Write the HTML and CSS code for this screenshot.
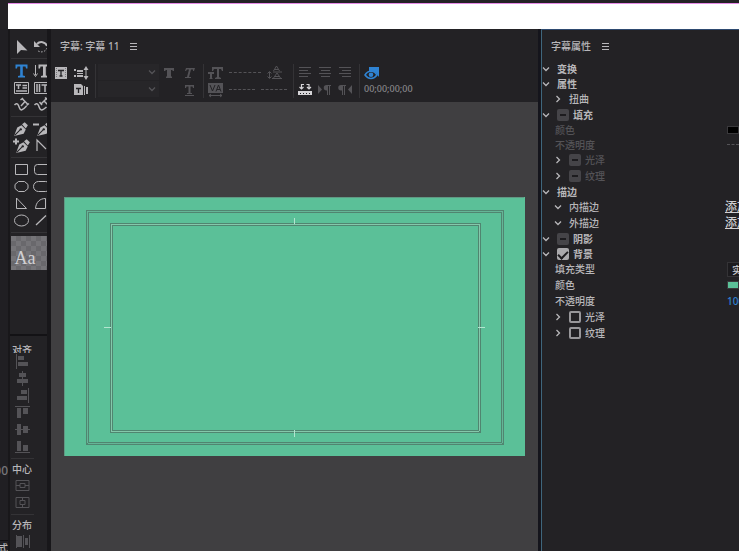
FILE: index.html
```html
<!DOCTYPE html>
<html>
<head>
<meta charset="utf-8">
<title>字幕</title>
<link rel="stylesheet" href="styles.css">
</head>
<body>
<svg class="defs" aria-hidden="true">
  <symbol id="down" viewBox="0 0 8 8"><path d="M1 2.500 4 5.500 7 2.500" fill="none" stroke="currentColor" stroke-width="1.300"/></symbol>
  <symbol id="right" viewBox="0 0 8 8"><path d="M2.500 1 5.500 4 2.500 7" fill="none" stroke="currentColor" stroke-width="1.300"/></symbol>
  <symbol id="menu" viewBox="0 0 8 8"><path d="M0 1.500h7M0 4.500h7M0 7.500h7" fill="none" stroke="currentColor"/></symbol>
  <symbol id="pen" viewBox="0 0 16 16"><path d="M1 15 4 7l4-2 4 4-2 4z" fill="currentColor"/><path d="M8.500 4 11 2l3 3-2 3z" fill="currentColor"/><path d="M1.500 14.500 6.500 9.500" stroke="#232225" stroke-width="1"/><circle cx="7.300" cy="8.800" r="1.100" fill="#232225"/></symbol>
</svg>

<div class="titlebar"></div>
<main class="app">
  <aside class="edge"><span class="edge-time">00</span><span class="edge-name">式</span></aside>

  <div class="side">
    <nav class="tools" aria-label="工具">
      <div class="group">
        <button aria-label="选择"><svg viewBox="0 0 17 17"><path d="M4 2v14l4-4 6.500 .5z" fill="currentColor"/></svg></button>
        <button aria-label="旋转"><svg viewBox="0 0 17 17" fill="none" stroke="currentColor"><path d="M4 6a6 6 0 0 1 10 2" stroke-width="2"/><path d="M1 3v6h6z" fill="currentColor" stroke="none"/><path d="M14 10a6 6 0 0 1-10 2" stroke-dasharray="1.500 1.500"/></svg></button>
      </div>
      <hr>
      <div class="group">
        <button class="active" aria-label="文字"><svg viewBox="0 0 17 17"><path d="M2.500 2.500h12v4h-1.500l-.5-2h-2.700v9l2.200.5v1.500H5v-1.500l2.200-.5v-9H4.500l-.5 2H2.500z" fill="currentColor"/></svg></button>
        <button aria-label="垂直文字"><svg viewBox="0 0 17 17"><path d="M5.500 2.500H17v4h-1.500l-.5-2h-2.200v9l2 .5v1.500H8v-1.500l2-.5v-9H7.500l-.5 2H5.500z" fill="currentColor"/><path d="M2.500 3v10M.5 11.500l2 3 2-3" fill="none" stroke="currentColor"/></svg></button>
        <button aria-label="区域文字"><svg viewBox="0 0 17 17" fill="none" stroke="currentColor"><path d="M1.500 3.500h14v11h-14z"/><path d="M3 6h5M5.500 6v4M9.500 6.500h4.500M9.500 9h4.500M3 12h11" stroke-width="1.500"/></svg></button>
        <button aria-label="垂直区域文字"><svg viewBox="0 0 17 17" fill="none" stroke="currentColor"><path d="M1.500 3.500h17v11h-17z"/><path d="M4 5v8M6.500 5v8M8.500 6h7M12 6v7M15.500 8v5" stroke-width="1.500"/></svg></button>
        <button aria-label="路径文字"><svg viewBox="0 0 17 17" fill="none" stroke="currentColor"><path d="M1.500 9c3-3 4 0 5 3s3 2.500 7-2" stroke-width="1.500"/><path d="m9 2.500 6 6M12 5.500 8 10M7.500 4 10 2M13.500 9.500 16 7.500" stroke-width="1.500"/></svg></button>
        <button aria-label="垂直路径文字"><svg viewBox="0 0 17 17" fill="none" stroke="currentColor"><path d="M1.500 9c3-3 4 0 5 3s3 2.500 7-1" stroke-width="1.500"/><path d="m14 2-6 6M11 5l5 5M6.500 6 9 9M12 1.500 15 4" stroke-width="1.500"/></svg></button>
      </div>
      <hr>
      <div class="group">
        <button aria-label="钢笔"><svg viewBox="0 0 17 17"><use href="#pen"/></svg></button>
        <button aria-label="删除锚点"><svg viewBox="0 0 17 17"><path d="M0 4.500h6" stroke="currentColor" stroke-width="2"/><use href="#pen" x="3"/></svg></button>
        <button aria-label="添加锚点"><svg viewBox="0 0 17 17"><path d="M0 4.500h6M3 1.500v6" stroke="currentColor" stroke-width="2"/><use href="#pen" x="2"/></svg></button>
        <button aria-label="转换锚点"><svg viewBox="0 0 17 17"><path d="M4 14V3l9 9" fill="none" stroke="currentColor" stroke-width="1.200"/></svg></button>
      </div>
      <hr>
      <div class="group">
        <button aria-label="矩形"><svg viewBox="0 0 17 17" fill="none" stroke="currentColor"><path d="M2.500 3.500h12v10h-12z"/></svg></button>
        <button aria-label="圆角矩形"><svg viewBox="0 0 17 17" fill="none" stroke="currentColor"><rect x="1.500" y="3.500" width="16" height="10" rx="3"/></svg></button>
        <button aria-label="切角矩形"><svg viewBox="0 0 17 17" fill="none" stroke="currentColor"><path d="M5.500 3.500h6l3.500 3v4l-3.500 3h-6L2 10.500v-4z"/></svg></button>
        <button aria-label="圆矩形"><svg viewBox="0 0 17 17" fill="none" stroke="currentColor"><rect x=".5" y="3.500" width="17" height="10" rx="5"/></svg></button>
        <button aria-label="楔形"><svg viewBox="0 0 17 17" fill="none" stroke="currentColor"><path d="M3.500 3v10.500h10z"/></svg></button>
        <button aria-label="弧形"><svg viewBox="0 0 17 17" fill="none" stroke="currentColor"><path d="M2.500 13.500C3 7 7 3.500 12.500 3.500v10z"/></svg></button>
        <button aria-label="椭圆"><svg viewBox="0 0 17 17" fill="none" stroke="currentColor"><ellipse cx="8.500" cy="8.500" rx="7" ry="5.500"/></svg></button>
        <button aria-label="直线"><svg viewBox="0 0 17 17" fill="none" stroke="currentColor"><path d="M3 13 13 3.500" stroke-width="1.300"/></svg></button>
      </div>
      <hr>
      <button class="style-swatch">Aa</button>
    </nav>

    <section class="align">
      <h2 class="clipped">对齐</h2>
      <button disabled aria-label="水平靠左"><svg viewBox="0 0 17 17"><path d="M2 1h1v15H2zM4 3h6v4H4zM4 9h10v4H4z" fill="currentColor"/></svg></button>
      <button disabled aria-label="水平居中"><svg viewBox="0 0 17 17"><path d="M8 1h1v15H8zM5 3h7v4H5zM3 9h11v4H3z" fill="currentColor"/></svg></button>
      <button disabled aria-label="水平靠右"><svg viewBox="0 0 17 17"><path d="M14 1h1v15h-1zM7 3h6v4H7zM3 9h10v4H3z" fill="currentColor"/></svg></button>
      <button disabled aria-label="垂直靠上"><svg viewBox="0 0 17 17"><path d="M1 2h15v1H1zM3 4h4v10H3zM9 4h5v6H9z" fill="currentColor"/></svg></button>
      <button disabled aria-label="垂直居中"><svg viewBox="0 0 17 17"><path d="M1 8h15v1H1zM3 3h4v11H3zM9 5h5v7H9z" fill="currentColor"/></svg></button>
      <button disabled aria-label="垂直靠下"><svg viewBox="0 0 17 17"><path d="M1 14h15v1H1zM3 3h4v10H3zM9 7h5v6H9z" fill="currentColor"/></svg></button>
      <hr>
      <h2>中心</h2>
      <button disabled aria-label="垂直居中于画面"><svg viewBox="0 0 17 17" fill="none" stroke="currentColor"><path d="M2 3.500h13v10H2zM6 6.500h5v4H6zM2 8.500h4M11 8.500h4"/></svg></button>
      <button disabled aria-label="水平居中于画面"><svg viewBox="0 0 17 17" fill="none" stroke="currentColor"><path d="M2 3.500h13v10H2zM6 6.500h5v4H6zM8.500 3.500v3M8.500 10.500v3"/></svg></button>
      <hr>
      <h2>分布</h2>
      <button disabled aria-label="水平分布"><svg viewBox="0 0 17 17"><path d="M2 2h1v13H2zM3 3h5v11H3zM9 2h1v13H9zM11 5h3v7h-3zM15 2h1v13h-1z" fill="currentColor"/></svg></button>
      <button disabled aria-label="分布居中"><svg viewBox="0 0 17 17"><path d="M8 1h1v15H8zM5 4h7v4H5z" fill="currentColor"/></svg></button>
    </section>
  </div>

  <section class="editor">
    <header class="panel-head"><h1>字幕: 字幕 11</h1><button aria-label="面板菜单"><svg class="menu"><use href="#menu"/></svg></button></header>
    <div class="toolbar">
      <div class="bar-group pair">
        <button aria-label="新建字幕"><svg viewBox="0 0 16 16"><path d="M2 2h12v12H2z" fill="currentColor"/><path d="M5 5.500h6M8 5v6M6.500 11h3" stroke="#232225" stroke-width="1.300"/><path d="M3.500 3v10M12.500 3v10" stroke="#77767a" stroke-dasharray="1 1"/></svg></button>
        <button aria-label="滚动选项"><svg viewBox="0 0 16 16"><path d="M1 4h2v2H1zM1 10h2v2H1zM4 5h6v2H4zM4 8h6v1H4zM4 10h6v2H4zM12.500 4h1v8h-1zM13 1l2.500 4h-5zM13 15l-2.500-4h5z" fill="currentColor"/></svg></button>
        <span></span>
        <button aria-label="模板"><svg viewBox="0 0 16 16"><path d="M1 2h7l2 2v9H1zM11 4h1v9h-1zM13 5h2v7h-2z" fill="currentColor"/><path d="M3 6.500h5M5.500 6v5" stroke="#232225" stroke-width="1.300"/></svg></button>
      </div>
      <div class="bar-group combos">
        <label class="combo"><select disabled aria-label="字体"><option></option></select><svg><use href="#down"/></svg></label>
        <label class="combo"><select disabled aria-label="字体样式"><option></option></select><svg><use href="#down"/></svg></label>
      </div>
      <div class="bar-group pair off">
        <button disabled aria-label="粗体"><svg viewBox="0 0 16 16"><path d="M3 3h10v3h-1l-1-1h-1v6l1 1v1H5v-1l1-1V5H5L4 6H3z" fill="currentColor"/></svg></button>
        <button disabled aria-label="斜体"><svg viewBox="0 0 16 16"><path d="M5 3h9l-1 3h-1V4.500h-2L8 12h2v1H4v-1h2l2-7.500H6L5 6H4z" fill="currentColor"/></svg></button>
        <span></span>
        <button disabled aria-label="下划线"><svg viewBox="0 0 16 16"><path d="M4 3h9v3h-1l-.5-1.500h-2V11H11v1H6v-1h1.500V4.500h-2L5 6H4zM4 13h9v1H4z" fill="currentColor"/></svg></button>
      </div>
      <div class="bar-group metrics off">
        <div class="line">
          <svg viewBox="0 0 16 16"><path d="M5 2h11v4h-1l-1-2h-2v8l2 1v1H8v-1l2-1V4H7L6 6H5zM1 7h6v2H5v4l1 1H2l1-1V9H1z" fill="currentColor"/></svg>
          <span class="dash wide"></span>
          <svg viewBox="0 0 16 16" fill="none" stroke="currentColor"><path d="m6.500 6 3-5 3 5M7.500 4.500h4M6 7h9M6.500 13l3.500-5 3.500 5M7.500 11.500h5M5 13.500h10M2.500 7v6M.5 8.500l2-2 2 2M.5 11.500l2 2 2-2"/></svg>
        </div>
        <div class="line">
          <svg viewBox="0 0 16 16"><path d="M1 1h15v10H1z" fill="currentColor"/><path d="m3 3 2.500 6L8 3M9 9.500 11.500 3 14 9.500M10 7.500h3" fill="none" stroke="#232225"/><path d="M2 13.500h13M4 12l-2 1.500L4 15M13 12l2 1.500-2 1.500" fill="none" stroke="currentColor"/></svg>
          <span class="dash"></span><span class="dash"></span>
        </div>
      </div>
      <div class="bar-group triple off">
        <button disabled aria-label="左对齐"><svg viewBox="0 0 16 16" stroke="currentColor"><path d="M2 2.500h12M2 5.500h9M2 8.500h12M2 11.500h9"/></svg></button>
        <button disabled aria-label="居中"><svg viewBox="0 0 16 16" stroke="currentColor"><path d="M2 2.500h12M4 5.500h9M2 8.500h12M4 11.500h9"/></svg></button>
        <button disabled aria-label="右对齐"><svg viewBox="0 0 16 16" stroke="currentColor"><path d="M2 2.500h12M5 5.500h9M2 8.500h12M5 11.500h9"/></svg></button>
        <button class="bright" aria-label="制表位"><svg viewBox="0 0 16 16"><path d="M1 9h14v4H1z" fill="currentColor"/><path d="M3.500 11v1M6.500 11v1M9.500 11v1M12.500 11v1" stroke="#232225"/><path d="M4.500 7V2.500H7M9.500 2.500H12V7M2.500 5l2 2 2-2M10 5l2 2 2-2" fill="none" stroke="currentColor" stroke-width="1.200"/></svg></button>
        <button disabled aria-label="从左至右"><svg viewBox="0 0 16 16"><path d="m1 3 4 4.500L1 12zM14 3H9.500a2.500 2.500 0 0 0 0 5.500h.5V13h1V4h1v9h1V4h1z" fill="currentColor"/></svg></button>
        <button disabled aria-label="从右至左"><svg viewBox="0 0 16 16"><path d="m15 3-4 4.500 4 4.500zM9 3H4a2.500 2.500 0 0 0 0 5.500h1V13h1V4h1v9h1V4h1z" fill="currentColor"/></svg></button>
      </div>
      <div class="bar-group video">
        <button aria-label="显示背景视频"><svg viewBox="0 0 16 16"><path d="M5 2h10v10l-3-4-7-2z" fill="currentColor"/><path d="M1 10c3-5 9-5 12 0-3 4.500-9 4.500-12 0z" fill="#232225" stroke="currentColor" stroke-width="1.500"/><circle cx="7" cy="9.800" r="2.300" fill="currentColor"/></svg></button>
        <span class="timecode">00;00;00;00</span>
      </div>
    </div>
    <div class="stage">
      <svg class="frame" viewBox="0 0 461 260" fill="none" shape-rendering="crispEdges">
        <path d="M0 0h461v260H0z" fill="#5bc098"/>
        <path d="M.5 260V.5h460" stroke="#609983"/>
        <g stroke="#508570" stroke-width="3"><path d="M23.500 14.500h415v232h-415zM47.500 27.500h368v207h-368z"/></g>
        <path d="M23.500 14.500h415v232h-415z" stroke="#65b597"/>
        <path d="M47.500 27.500h368v207h-368z" stroke="#84c8ab"/>
        <path d="M230.500 21v6M230.500 233v7M40 130.500h7M414 130.500h7" stroke="#b2e5cf" stroke-width="1"/>
      </svg>
    </div>
  </section>

  <section class="props">
    <header class="panel-head"><h1>字幕属性</h1><button aria-label="面板菜单"><svg class="menu"><use href="#menu"/></svg></button></header>
    <div class="rows">
      <div class="row top"><button aria-label="折叠"><svg><use href="#down"/></svg></button><span>变换</span></div>
      <div class="row top"><button aria-label="折叠"><svg><use href="#down"/></svg></button><span>属性</span></div>
      <div class="row sub"><button aria-label="展开"><svg><use href="#right"/></svg></button><span>扭曲</span></div>
      <div class="row top"><button aria-label="折叠"><svg><use href="#down"/></svg></button><label><input type="checkbox" disabled>填充</label></div>
      <div class="row field off"><span class="name">颜色</span><button class="color black" disabled aria-label="填充颜色"></button></div>
      <div class="row field off"><span class="name">不透明度</span><span class="dash"></span></div>
      <div class="row sub off"><button aria-label="展开"><svg><use href="#right"/></svg></button><label><input type="checkbox" disabled>光泽</label></div>
      <div class="row sub off"><button aria-label="展开"><svg><use href="#right"/></svg></button><label><input type="checkbox" disabled>纹理</label></div>
      <div class="row top"><button aria-label="折叠"><svg><use href="#down"/></svg></button><span>描边</span></div>
      <div class="row sub"><button aria-label="折叠"><svg><use href="#down"/></svg></button><span class="name">内描边</span><a href="#inner">添加</a></div>
      <div class="row sub"><button aria-label="折叠"><svg><use href="#down"/></svg></button><span class="name">外描边</span><a href="#outer">添加</a></div>
      <div class="row top"><button aria-label="折叠"><svg><use href="#down"/></svg></button><label><input type="checkbox" disabled>阴影</label></div>
      <div class="row top"><button aria-label="折叠"><svg><use href="#down"/></svg></button><label><input type="checkbox" checked>背景</label></div>
      <div class="row field live"><label class="name" for="fill">填充类型</label><select id="fill"><option>实底</option></select></div>
      <div class="row field live"><span class="name">颜色</span><button class="color green" aria-label="背景颜色"></button></div>
      <div class="row field live"><span class="name">不透明度</span><span class="number">100 %</span></div>
      <div class="row sub"><button aria-label="展开"><svg><use href="#right"/></svg></button><label><input type="checkbox">光泽</label></div>
      <div class="row sub"><button aria-label="展开"><svg><use href="#right"/></svg></button><label><input type="checkbox">纹理</label></div>
    </div>
  </section>
</main>
</body>
</html>
```
FILE: styles.css
```css
:root {
  --panel: #232225;
  --gutter: #18171a;
  --text: #b8b7ba;
  --off: #545357;
  --blue: #2f83d3;
}

* { box-sizing: border-box; }

body {
  margin: 0;
  height: 100vh;
  overflow: hidden;
  display: flex;
  flex-direction: column;
  background: var(--panel);
  color: var(--text);
  font: 500 10px/14px "Noto Sans", "Noto Sans CJK SC", sans-serif;
}

.defs { position: absolute; width: 0; height: 0; }

button {
  padding: 0;
  border: 0;
  background: none;
  color: inherit;
  font: inherit;
  display: flex;
  align-items: center;
  justify-content: center;
}

h1, h2 { margin: 0; font: inherit; }

hr { margin: 3px 0; border: 0; border-top: 1px solid #343336; width: 100%; }

.titlebar {
  flex: none;
  height: 26px;
  margin: 3px 0 0 8px;
  background: #fff;
  border-top: 1px solid #e58be6;
}

.app {
  flex: 1;
  min-height: 0;
  display: grid;
  grid-template-columns: 8px 43px minmax(0, 1fr) 26.8%;
}

/* Neighbouring panel, mostly out of view */
.edge {
  overflow: hidden;
  display: flex;
  flex-direction: column;
  justify-content: flex-end;
  align-items: flex-end;
  background: #201f23;
  color: #77767a;
}
.edge-time { font-size: 12px; margin-bottom: 62px; }
.edge-name { color: var(--text); border-top: 1px solid #111013; margin-bottom: -4px; }

/* Tools */
.side {
  min-height: 0;
  overflow: hidden;
  display: flex;
  flex-direction: column;
  border-left: 2px solid var(--gutter);
  border-right: 4px solid var(--gutter);
}
.tools { padding: 9px 0 64px 1px; border-bottom: 2px solid #131215; }
.group {
  display: grid;
  grid-template-columns: 17px 17px;
  grid-auto-rows: 17px;
  column-gap: 3px;
  padding-left: 2px;
  overflow: hidden;
}
.group svg, .align svg { width: 17px; height: 17px; flex: none; }
.active { color: var(--blue); }
.style-swatch {
  width: 100%;
  height: 34px;
  padding: 10px 8px 0 0;
  color: #d0cfd2;
  font: 18px/20px "Liberation Serif", serif;
  background: repeating-conic-gradient(#69686c 0 25%, #757478 0 50%) 0 0 / 10px 10px;
}

.align { flex: 1; min-height: 0; padding: 8px 13px 0 1px; }
.align button { width: 100%; height: 17px; color: var(--off); }
.align h2 { line-height: 15px; padding-left: 1px; }
.align .clipped { height: 9px; line-height: 13px; overflow: hidden; }

/* Editor */
.editor { display: flex; flex-direction: column; min-height: 0; border-right: 3px solid #15151c; }
.panel-head { display: flex; align-items: center; gap: 11px; height: 33px; padding-left: 9px; flex: none; }
.menu { width: 8px; height: 8px; }

.toolbar { display: flex; height: 40px; padding: 2px 0 4px 2px; flex: none; }
.bar-group { padding-right: 6px; margin-right: 2px; border-right: 1px solid #343336; }
.bar-group svg { width: 16px; height: 16px; flex: none; }
.pair { display: grid; grid-template-columns: 16px 16px; grid-auto-rows: 17px; column-gap: 4px; }
.combos { display: grid; grid-auto-rows: 16px; row-gap: 1px; border: 0; padding: 0; }
.combo { position: relative; display: flex; }
.combo select { width: 61px; border: 0; background: #29282b; appearance: none; }
.bar-group .combo svg { position: absolute; right: 3px; top: 4px; width: 8px; height: 8px; color: var(--off); }
.off { color: var(--off); }
.bright { color: #d5d4d7; }
.metrics { padding-left: 1px; }
.line { display: flex; align-items: center; gap: 6px; height: 17px; }
.dash { width: 26px; border-top: 1px dashed var(--off); }
.dash.wide { width: 32px; }
.triple { display: grid; grid-template-columns: repeat(3, 16px); grid-auto-rows: 17px; column-gap: 4px; padding-left: 1px; }
.video { border: 0; display: grid; grid-template-rows: 17px 17px; justify-items: start; padding-left: 2px; }
.video button { color: var(--blue); }
.timecode { color: #87868a; font-size: 9px; line-height: 15px; }

.stage {
  flex: 1;
  min-height: 0;
  padding: 0 13px;
  display: flex;
  align-items: center;
  background: #403f41;
}
.frame { width: 100%; display: block; }

/* Properties */
.props { overflow: hidden; border-left: 1px solid #3f667c; border-top: 1px solid #2e4a70; }
.props .panel-head { height: 31px; }
.row { display: flex; align-items: center; height: 15px; white-space: nowrap; }
.row.top { font-weight: 700; }
.row.sub { height: 16px; padding-left: 12px; }
.row.live { height: 16px; }
.row.field { padding-left: 13px; }
.row > button:first-child { width: 8px; margin-right: 7px; color: var(--text); }
.row svg { width: 8px; height: 8px; }
.row label { display: flex; align-items: center; gap: 4px; }
.name { flex: none; width: 172px; }
.row.sub .name { width: 156px; }
.row a { color: #d0cfd2; font-size: 12px; }
.row input {
  appearance: none;
  width: 12px;
  height: 12px;
  margin: 0;
  border: 2px solid #98979a;
  border-radius: 2px;
  display: grid;
  place-items: center;
}
.row input:disabled { border: 0; background: #454448; }
.row input:disabled::after { content: ""; width: 6px; height: 2px; background: #1d1c1f; }
.row input:checked { border: 0; background: #aaa9ac; }
.row input:checked::after {
  content: "";
  width: 8px;
  height: 4px;
  border: solid #1d1c1f;
  border-width: 0 0 2px 2px;
  transform: rotate(-45deg);
}
.row select { width: 90px; height: 15px; padding: 0 4px; border: 1px solid #343336; background: #1c1b1e; color: #d0cfd2; font: inherit; appearance: none; }
.color { width: 40px; height: 8px; border: 1px solid #3a393c; }
.black { background: #000; }
.green { background: #5bc098; }
.number { color: var(--blue); }
```
